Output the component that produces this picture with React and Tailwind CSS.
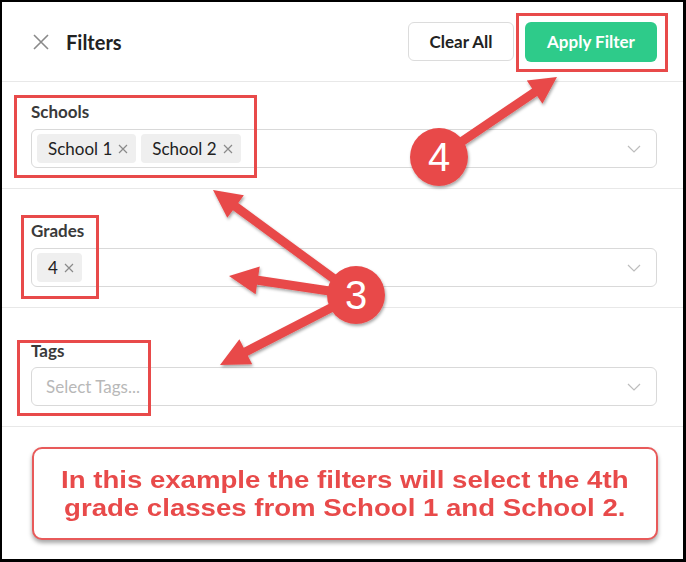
import React from 'react';

const RED = '#e84a4a';

// arrow polygon from tail to tip, with a triangular head
function arrowPoints(x1, y1, x2, y2, headLen = 28, headHalf = 14, shaftHalf = 4.5) {
  const dx = x2 - x1;
  const dy = y2 - y1;
  const len = Math.hypot(dx, dy);
  const ux = dx / len;
  const uy = dy / len;
  const nx = -uy;
  const ny = ux;
  const bx = x2 - ux * headLen;
  const by = y2 - uy * headLen;
  const pts = [
    [x1 + nx * shaftHalf, y1 + ny * shaftHalf],
    [bx + nx * shaftHalf, by + ny * shaftHalf],
    [bx + nx * headHalf, by + ny * headHalf],
    [x2, y2],
    [bx - nx * headHalf, by - ny * headHalf],
    [bx - nx * shaftHalf, by - ny * shaftHalf],
    [x1 - nx * shaftHalf, y1 - ny * shaftHalf],
  ];
  return pts.map((p) => p.join(',')).join(' ');
}

function Chevron() {
  return (
    <svg width="14" height="8" viewBox="0 0 14 8" fill="none">
      <path d="M1 1 L7 7 L13 1" stroke="#bdbdbd" strokeWidth="1.2" />
    </svg>
  );
}

function Chip({ label }) {
  return (
    <span className="flex items-center h-[29px] pl-[11px] pr-[8px] bg-[#efefef] rounded text-[17px] text-[#222]">
      {label}
      <svg className="ml-[6px]" width="10" height="10" viewBox="0 0 10 10">
        <path d="M1 1 L9 9 M9 1 L1 9" stroke="#8a8a8a" strokeWidth="1.2" />
      </svg>
    </span>
  );
}

function Field({ label, chips, placeholder, className, gap = 'mt-[6px]' }) {
  return (
    <div className={`pl-[29px] pr-[26px] pb-5 border-b border-[#e8e8e8] ${className}`}>
      <div className="text-[17px] font-bold text-[#3a3a3a] leading-6">{label}</div>
      <div className={`${gap} h-[39px] border border-[#d9d9d9] rounded-md flex items-center pl-[5px] pr-[15px]`}>
        <div className="flex-1 flex items-center gap-[5px]">
          {chips && chips.map((c) => <Chip key={c} label={c} />)}
          {placeholder && <span className="pl-[9px] text-[17px] text-[#b8b8b8]">{placeholder}</span>}
        </div>
        <Chevron />
      </div>
    </div>
  );
}

function Annotations() {
  return (
    <svg className="absolute inset-0 pointer-events-none" width="686" height="562">
      <defs>
        <filter id="sh" x="-20%" y="-20%" width="140%" height="140%">
          <feDropShadow dx="1" dy="2" stdDeviation="1.5" floodColor="#000" floodOpacity="0.35" />
        </filter>
      </defs>
      <g fill="none" stroke={RED} strokeWidth="3">
        <rect x="517.5" y="14.5" width="149" height="56" />
        <rect x="15.5" y="96.5" width="240" height="80" />
        <rect x="22.5" y="216.5" width="75" height="81" />
        <rect x="18.5" y="341.5" width="131" height="73" />
      </g>
      <g fill={RED} filter="url(#sh)">
        <polygon points={arrowPoints(439, 157, 557, 77, 27, 14)} />
        <polygon points={arrowPoints(356, 295, 213, 190, 28, 14)} />
        <polygon points={arrowPoints(356, 295, 229, 276, 29, 14)} />
        <polygon points={arrowPoints(356, 295, 220, 365, 29, 14)} />
        <circle cx="439" cy="157" r="29" />
        <circle cx="356" cy="295" r="29" />
      </g>
      <g fill="#fff" fontFamily="'Liberation Sans', Arial, sans-serif" fontSize="40" textAnchor="middle">
        <text x="439" y="171">4</text>
        <text x="356" y="309">3</text>
      </g>
    </svg>
  );
}

export default function App() {
  return (
    <div className="relative w-[686px] h-[562px] bg-white" style={{ fontFamily: 'Lato, "Open Sans", sans-serif' }}>
      <div className="w-full h-full border-2 border-r-[3px] border-b-[3px] border-black flex flex-col">
        {/* Header */}
        <div className="h-[80px] shrink-0 flex items-center pl-[31px] pr-[26px] border-b border-[#e8e8e8]">
          <svg width="16" height="16" viewBox="0 0 16 16">
            <path d="M1 1 L15 15 M15 1 L1 15" stroke="#8a8a8a" strokeWidth="1.6" />
          </svg>
          <span className="ml-[17px] text-[20px] font-bold text-[#222]">Filters</span>
          <div className="ml-auto flex items-center gap-[11px]">
            <button className="w-[106px] h-[39px] border border-[#dcdcdc] rounded-md text-[17px] font-bold text-[#222]">
              Clear All
            </button>
            <button className="w-[132px] h-[40px] bg-[#2ecb8a] rounded-md text-[17px] font-bold text-white">
              Apply Filter
            </button>
          </div>
        </div>

        <Field label="Schools" chips={['School 1', 'School 2']} className="pt-[18px]" gap="mt-[5px]" />
        <Field label="Grades" chips={['4']} className="pt-[30px]" gap="mt-[5px]" />
        <Field label="Tags" placeholder="Select Tags..." className="pt-[31px]" gap="mt-[4px]" />

        {/* Callout */}
        <div className="pt-[20px] pl-[30px] pr-[25px]">
          <div className="h-[93px] border-2 border-[#e85a5a] rounded-[10px] bg-white shadow-[0_3px_4px_rgba(0,0,0,0.35)] flex items-center justify-center">
            <p
              className="text-center text-[24px] font-bold leading-[28px] text-[#e84a4a] scale-x-[1.15]"
              style={{ fontFamily: '"Liberation Sans", Arial, sans-serif' }}
            >
              In this example the filters will select the 4th
              <br />
              grade classes from School 1 and School 2.
            </p>
          </div>
        </div>
      </div>
      <Annotations />
    </div>
  );
}
